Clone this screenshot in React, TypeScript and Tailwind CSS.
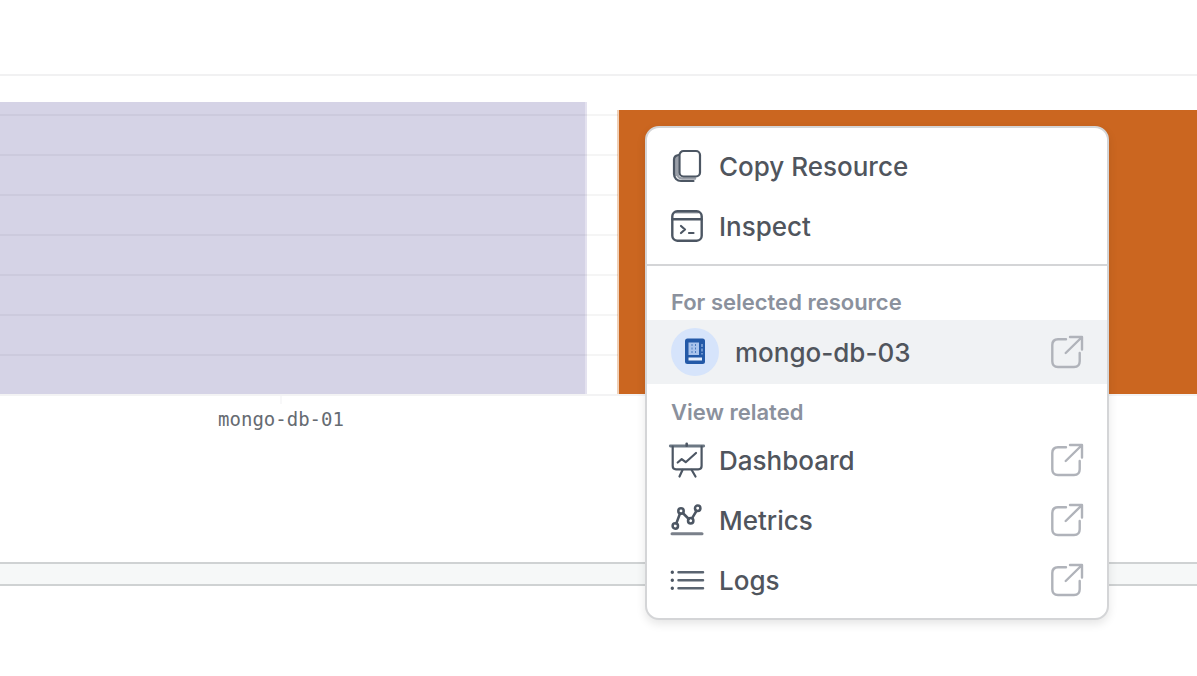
import type { ReactNode } from "react";

const iconProps = {
  viewBox: "0 0 32 32",
  fill: "none",
  stroke: "currentColor",
  strokeWidth: 2.2,
  strokeLinecap: "round",
  strokeLinejoin: "round",
  "aria-hidden": true,
} as const;

const iconClass = "size-8 shrink-0 overflow-visible text-[#4c5663]";

function CopyIcon() {
  return (
    <svg {...iconProps} className={iconClass}>
      <path d="M6.500 6v18c0 2.500 2 4.500 4.500 4.500h13M5 6v19" stroke="#9a9fa8" strokeWidth="2.500" />
      <path d="M7.500 5C4.600 5.500 3 7 3 9.500V24c0 4 3 7 7 7h12.500" />
      <rect x="8.500" y="1" width="20.500" height="25.500" rx="4" fill="#fff" />
    </svg>
  );
}

function InspectIcon() {
  return (
    <svg {...iconProps} className={iconClass}>
      <path d="M5 2.300h22" stroke="#a3a8b0" strokeWidth="2.500" />
      <rect x="1.300" y="1.300" width="29.400" height="29.400" rx="5" strokeWidth="2.400" />
      <path d="M1.500 9.300h29" strokeWidth="2.400" />
      <path d="m10 16 4 3.500-4 3.500M18 23h4.500" />
    </svg>
  );
}

function DashboardIcon() {
  return (
    <svg {...iconProps} className={iconClass}>
      <path d="M-.7 2h33.400" stroke="#6c7884" strokeWidth="2.800" />
      <path d="M15.700-.3v2" strokeWidth="2.600" />
      <path d="M1.700 2.500v19.500c0 2 1.300 3.300 3.300 3.300h22.300c2 0 3.300-1.300 3.300-3.300V2.500" />
      <path d="m11.500 26-3 6.500M20.700 26l3.800 6.500" />
      <path d="m6.700 18.500 4-3.300 4 3L25 9" />
    </svg>
  );
}

function MetricsIcon() {
  return (
    <svg {...iconProps} strokeWidth={2.5} className={iconClass}>
      <circle cx="4.300" cy="22" r="2.700" />
      <circle cx="10" cy="7" r="2.700" />
      <circle cx="19.700" cy="16.700" r="2.700" />
      <circle cx="26.700" cy="4.300" r="2.700" />
      <path d="m5.300 19.500 3.700-10M11.800 9l6 6M21 14.300l4.400-7.300" />
      <path d="M1 29.700h30" stroke="#7a808a" strokeWidth="3" />
    </svg>
  );
}

function LogsIcon() {
  return (
    <svg {...iconProps} className={iconClass}>
      <path d="M7.500 8.300h24.500M7.500 16.300h24.500M7.500 24.300h24.500" strokeWidth="2.500" stroke="#5a6470" />
      <path d="M1.300 8.300h.01M1.300 16.300h.01M1.300 24.300h.01" strokeWidth="3.400" />
    </svg>
  );
}

function ExternalIcon() {
  return (
    <svg
      {...iconProps}
      strokeWidth={2.4}
      className="ml-auto size-8 shrink-0 overflow-visible text-[#b0b3ba]"
    >
      <path d="M15 3.300H7c-3.500 0-5.700 2.200-5.700 5.700v16.300c0 3.500 2.200 5.700 5.700 5.700h16c3.500 0 5.700-2.200 5.700-5.700v-8.300" />
      <path d="M14.700 17 30.500 1.500M19 1h12v12.500" />
    </svg>
  );
}

function ResourceBadge() {
  return (
    <svg viewBox="0 0 48 48" aria-hidden="true" className="size-12 shrink-0">
      <circle cx="24" cy="24" r="24" fill="#d6e4fb" />
      <rect x="14" y="10.500" width="20" height="25.500" rx="2.500" fill="#2359a8" />
      <rect x="17.500" y="14.500" width="10.500" height="12.500" fill="#a9c3ec" />
      <path d="M21 16v10M24.500 16v10" stroke="#4d7cc0" strokeDasharray="2 1.500" />
      <path d="M31 16v10.500" stroke="#9dbbe8" strokeWidth="1.200" strokeDasharray="3 1.500" />
      <path d="M17.500 31h13.500" stroke="#e6effd" strokeWidth="3" />
    </svg>
  );
}

function ActionItem({ icon, children }: { icon: ReactNode; children: string }) {
  return (
    <button type="button" role="menuitem" className="flex h-15 w-full items-center gap-4 px-6 text-left">
      {icon}
      <span className="pt-0.5">{children}</span>
    </button>
  );
}

function LinkItem({ icon, children }: { icon: ReactNode; children: string }) {
  return (
    <a href="#" role="menuitem" className="flex h-15 items-center gap-4 px-6">
      {icon}
      <span className="pt-0.5">{children}</span>
      <ExternalIcon />
    </a>
  );
}

function GroupLabel({ children }: { children: string }) {
  return (
    <div className="flex h-9 items-center px-6 text-[22px] leading-7 font-semibold text-[#8b919d]">{children}</div>
  );
}

function ContextMenu() {
  return (
    <div
      role="menu"
      aria-label="Resource actions"
      className="absolute top-[126px] left-[645px] w-[464px] rounded-[14px] border-2 border-[#d4d5d7] bg-white font-[Inter,sans-serif] text-[26px] leading-8 font-medium text-[#50555d] shadow-[0_4px_10px_rgba(0,0,0,0.1)]"
    >
      <div className="border-b-2 border-[#d4d5d7] py-2">
        <ActionItem icon={<CopyIcon />}>Copy Resource</ActionItem>
        <ActionItem icon={<InspectIcon />}>Inspect</ActionItem>
      </div>
      <div className="pt-[18px]">
        <GroupLabel>For selected resource</GroupLabel>
        <a href="#" role="menuitem" className="flex h-16 items-center gap-4 bg-[#f0f2f4] px-6">
          <ResourceBadge />
          <span className="pt-0.5">mongo-db-03</span>
          <ExternalIcon />
        </a>
      </div>
      <div className="pt-[10px] pb-2">
        <GroupLabel>View related</GroupLabel>
        <LinkItem icon={<DashboardIcon />}>Dashboard</LinkItem>
        <LinkItem icon={<MetricsIcon />}>Metrics</LinkItem>
        <LinkItem icon={<LogsIcon />}>Logs</LinkItem>
      </div>
    </div>
  );
}

const gridRows = [0, 1, 2, 3, 4, 5, 6];

export default function App() {
  return (
    <main className="relative min-h-screen overflow-hidden bg-white">
      <header className="h-[76px] border-b-2 border-[#f1f1f2]" />
      <section aria-label="Resource chart" className="h-[486px] pt-[26px]">
        <div className="grid">
          <div className="col-start-1 row-start-1 flex items-end gap-[30px]">
            <div className="h-[292px] flex-[587_1_0%] border-r-2 border-[#e4e2ef] bg-[#d5d3e6]" />
            <div className="h-[284px] flex-[580_1_0%] border-l-2 border-[#efd0b8] bg-[#cb6620]" />
          </div>
          <div className="col-start-1 row-start-1 grid grid-cols-[618fr_579fr] pt-3">
            <div>
              {gridRows.map((row) => (
                <div key={row} className="h-10 border-t-2 border-black/4" />
              ))}
            </div>
          </div>
        </div>
        <div className="grid grid-cols-[562fr_635fr] border-t-2 border-[#f3f3f4]">
          <div className="flex flex-col items-center">
            <div className="h-2 w-0.5 bg-[#f8f8f9]" />
            <span className="pt-[3px] font-['DejaVu_Sans_Mono',monospace] text-[19px] leading-6 text-[#666b72]">
              mongo-db-01
            </span>
          </div>
        </div>
      </section>
      <div className="h-6 border-y-2 border-[#cfd2d3] bg-[#f6f8f8]" />
      <ContextMenu />
    </main>
  );
}
